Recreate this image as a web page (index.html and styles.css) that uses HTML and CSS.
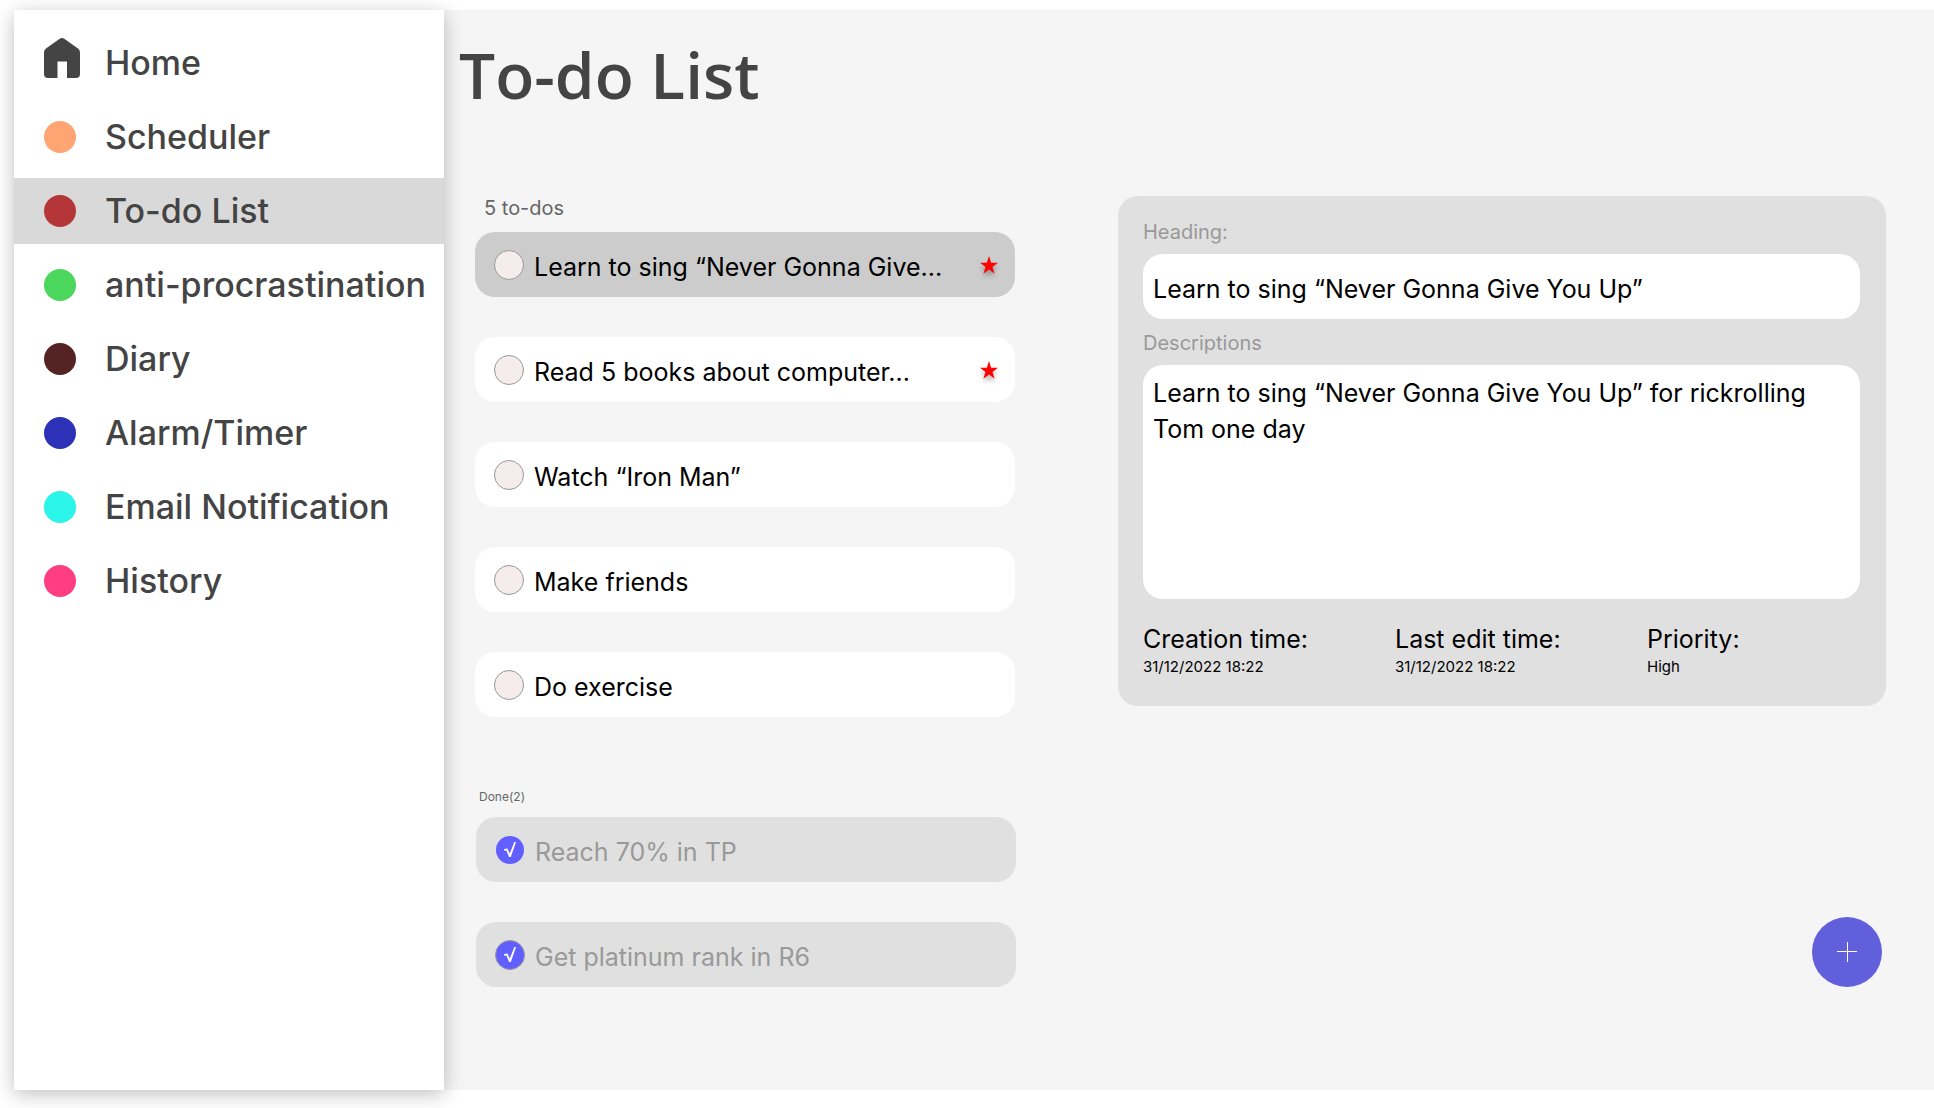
FILE: index.html
```html
<!DOCTYPE html>
<html lang="en">
<head>
  <meta charset="utf-8">
  <meta name="viewport" content="width=device-width, initial-scale=1">
  <title>To-do List</title>
  <link rel="stylesheet" href="styles.css">
</head>
<body>
  <div class="app">
    <nav class="sidebar" aria-label="Main">
      <a class="nav-item" href="#home">
        <span class="nav-icon">
          <svg class="home-icon" viewBox="0 0 36 50" aria-hidden="true"><path d="M15.400 .9Q18-.9 20.600.9L34 10.500Q36 12 36 14.500V36Q36 40 32 40H23V23.500H13.500V40H4Q0 40 0 36V14.500Q0 12 2 10.500Z"/></svg>
        </span>
        Home
      </a>
      <a class="nav-item" href="#scheduler"><span class="nav-icon dot dot-orange"></span>Scheduler</a>
      <a class="nav-item active" href="#todo" aria-current="page"><span class="nav-icon dot dot-red"></span>To-do List</a>
      <a class="nav-item" href="#anti-procrastination"><span class="nav-icon dot dot-green"></span>anti-procrastination</a>
      <a class="nav-item" href="#diary"><span class="nav-icon dot dot-brown"></span>Diary</a>
      <a class="nav-item" href="#alarm"><span class="nav-icon dot dot-blue"></span>Alarm/Timer</a>
      <a class="nav-item" href="#email"><span class="nav-icon dot dot-cyan"></span>Email Notification</a>
      <a class="nav-item" href="#history"><span class="nav-icon dot dot-pink"></span>History</a>
    </nav>

    <main class="main">
      <h1 class="title">To-do List</h1>
      <div class="columns">
        <div class="lists">
          <section>
            <h2 class="count">5 to-dos</h2>
            <ul class="todo-list">
              <li class="todo selected">
                <input class="check" type="checkbox" id="t1">
                <label class="todo-text" for="t1">Learn to sing “Never Gonna Give...</label>
                <button class="star" type="button" aria-label="High priority"><svg viewBox="0 0 18 18" aria-hidden="true"><path d="M9 0L11.100 6.700H18L12.500 10.900L14.600 17.800L9 13.600L3.400 17.800L5.500 10.900L0 6.700H6.900Z"/></svg></button>
              </li>
              <li class="todo">
                <input class="check" type="checkbox" id="t2">
                <label class="todo-text" for="t2">Read 5 books about computer...</label>
                <button class="star" type="button" aria-label="High priority"><svg viewBox="0 0 18 18" aria-hidden="true"><path d="M9 0L11.100 6.700H18L12.500 10.900L14.600 17.800L9 13.600L3.400 17.800L5.500 10.900L0 6.700H6.900Z"/></svg></button>
              </li>
              <li class="todo">
                <input class="check" type="checkbox" id="t3">
                <label class="todo-text" for="t3">Watch “Iron Man”</label>
              </li>
              <li class="todo">
                <input class="check" type="checkbox" id="t4">
                <label class="todo-text" for="t4">Make friends</label>
              </li>
              <li class="todo">
                <input class="check" type="checkbox" id="t5">
                <label class="todo-text" for="t5">Do exercise</label>
              </li>
            </ul>
          </section>
          <section class="done">
            <h2 class="done-count">Done(2)</h2>
            <ul class="todo-list">
              <li class="todo finished">
                <input class="check borderless" type="checkbox" id="d1" checked>
                <label class="todo-text" for="d1">Reach 70% in TP</label>
              </li>
              <li class="todo finished">
                <input class="check" type="checkbox" id="d2" checked>
                <label class="todo-text" for="d2">Get platinum rank in R6</label>
              </li>
            </ul>
          </section>
        </div>

        <div class="side">
          <form class="detail">
            <label class="field-label" for="heading">Heading:</label>
            <input class="field heading" type="text" id="heading" value="Learn to sing “Never Gonna Give You Up”">
            <label class="field-label" for="description">Descriptions</label>
            <textarea class="field description" id="description">Learn to sing “Never Gonna Give You Up” for rickrolling Tom one day</textarea>
            <dl class="meta">
              <div><dt>Creation time:</dt><dd>31/12/2022 18:22</dd></div>
              <div><dt>Last edit time:</dt><dd>31/12/2022 18:22</dd></div>
              <div><dt>Priority:</dt><dd>High</dd></div>
            </dl>
          </form>
          <button class="add" type="button" aria-label="Add to-do"><svg viewBox="0 0 20 20" aria-hidden="true"><path d="M0 9.500H20M10.500 0V20"/></svg></button>
        </div>
      </div>
    </main>
  </div>
</body>
</html>
```
FILE: styles.css
```css
* {
  box-sizing: border-box;
}

body {
  margin: 0;
  padding: 10px 0 18px 14px;
  background: #fff;
  color: #000;
  font-family: "Inter", sans-serif;
  font-size: 25px;
  line-height: 36px;
}

h1, h2, ul, dl, dd {
  margin: 0;
  padding: 0;
}

button {
  padding: 0;
  border: 0;
  cursor: pointer;
}

.app {
  display: flex;
  min-height: calc(100vh - 28px);
}

/* Sidebar */
.sidebar {
  position: relative;
  display: flex;
  flex: 0 0 430px;
  flex-direction: column;
  gap: 8px;
  padding-top: 20px;
  background: #fff;
  box-shadow: 0 4px 18px rgba(0, 0, 0, 0.25);
}

.nav-item {
  display: flex;
  align-items: center;
  gap: 29px;
  height: 66px;
  padding-left: 30px;
  color: #444;
  font-size: 34px;
  font-weight: 500;
  text-decoration: none;
  white-space: nowrap;
}

.nav-item.active {
  background: #d9d9d9;
}

.nav-icon {
  flex: none;
  width: 32px;
}

.home-icon {
  display: block;
  width: 36px;
  height: 50px;
  fill: #444;
}

.dot {
  height: 32px;
  border-radius: 50%;
}

.dot-orange { background: #ffa573; }
.dot-red { background: #b53638; }
.dot-green { background: #4bd75b; }
.dot-brown { background: #562324; }
.dot-blue { background: #2c31b8; }
.dot-cyan { background: #2af5e8; }
.dot-pink { background: #ff3e82; }

/* Content */
.main {
  display: flex;
  flex: 1;
  flex-direction: column;
  gap: 85px;
  min-width: 0;
  padding: 29px 48px 40px 15px;
  background: #f5f5f5;
}

.title {
  color: #444;
  font-family: "Open Sans", sans-serif;
  font-size: 64px;
  font-weight: 600;
  line-height: 72px;
}

.columns {
  display: grid;
  grid-template-columns: minmax(0, 540fr) minmax(0, 768fr);
  gap: 103px;
  padding-left: 16px;
}

.count,
.done-count {
  margin-bottom: 12px;
  padding-left: 9px;
  color: #666;
  font-size: 20px;
  font-weight: 400;
  line-height: 24px;
}

.done-count {
  padding-left: 3px;
  font-size: 12px;
  line-height: 16px;
}

.todo-list {
  display: flex;
  flex-direction: column;
  gap: 40px;
  list-style: none;
}

.done {
  margin: 72px -1px 0 1px;
}

.todo {
  display: flex;
  align-items: center;
  gap: 10px;
  height: 65px;
  padding: 0 17px 0 19px;
  border-radius: 20px;
  background: #fff;
}

.todo.selected {
  background: #ccc;
}

.todo.finished {
  background: #e0e0e0;
  color: #999;
}

.todo-text {
  flex: 1;
  padding-top: 4px;
  white-space: nowrap;
}

.check {
  display: grid;
  flex: none;
  place-items: center;
  width: 30px;
  height: 30px;
  margin: 0;
  border: 1px solid #999;
  border-radius: 50%;
  background: #f5edeb;
  appearance: none;
}

.check:checked {
  background: #615fff;
}

.check:checked::before {
  width: 12px;
  height: 15px;
  background: #fff;
  clip-path: polygon(0 46%, 28% 43%, 48% 76%, 86% 0, 100% 0, 57% 100%, 42% 100%, 20% 57%, 2% 59%);
  content: "";
}

.check.borderless {
  border-color: transparent;
  background-clip: padding-box;
}

.star {
  width: 18px;
  height: 22px;
  background: none;
}

.star svg {
  display: block;
  width: 18px;
  height: 18px;
  overflow: visible;
  fill: #f00;
  filter: drop-shadow(0 4px 2px rgba(0, 0, 0, 0.25));
}

/* Detail panel */
.side {
  display: flex;
  flex-direction: column;
  justify-content: space-between;
}

.detail {
  display: flex;
  flex-direction: column;
  padding: 24px 26px 27px 25px;
  border-radius: 20px;
  background: #e0e0e0;
}

.field-label {
  margin-bottom: 10px;
  color: #999;
  font-size: 20px;
  line-height: 24px;
}

.field {
  width: 100%;
  border: 0;
  border-radius: 20px;
  background: #fff;
  color: #000;
  font: inherit;
  resize: none;
}

.heading {
  height: 65px;
  margin-bottom: 12px;
  padding: 4px 10px 0;
}

.description {
  height: 234px;
  padding: 10px;
}

.meta {
  display: grid;
  grid-template-columns: 252fr 252fr 213fr;
  padding-top: 24px;
  line-height: 32px;
}

.meta dd {
  font-size: 15px;
  line-height: 24px;
}

.add {
  display: grid;
  align-self: flex-end;
  place-items: center;
  width: 70px;
  height: 70px;
  margin-right: 4px;
  border-radius: 50%;
  background: #615fdb;
}

.add svg {
  width: 20px;
  height: 20px;
  stroke: #fff;
}
```
